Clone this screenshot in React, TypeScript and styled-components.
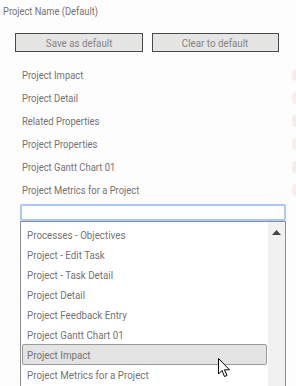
import React from "react";
import styled, { createGlobalStyle } from "styled-components";

const GlobalStyle = createGlobalStyle`
  html, body {
    margin: 0;
    padding: 0;
    background: #fdfdfd;
    overflow: hidden;
  }
  body {
    font-family: Roboto, "Liberation Sans", sans-serif;
    font-size: 11.5px;
    color: #757373;
  }
`;

const Page = styled.div`
  width: 296px;
  height: 386px;
  position: relative;
  overflow: hidden;
`;

// the app renders a narrow face; squeeze Roboto horizontally to match
const Label = styled.span<{ $sx?: number }>`
  display: inline-block;
  white-space: nowrap;
  transform: scaleX(${(p) => p.$sx ?? 0.82});
  transform-origin: left center;
`;

const Title = styled.div`
  padding: 4px 0 0 3px;
  height: 14px;
  line-height: 14px;
`;

const ButtonRow = styled.div`
  display: flex;
  gap: 9px;
  padding: 15px 0 0 15px;
`;

const Button = styled.button<{ $w: number }>`
  width: ${(p) => p.$w}px;
  height: 19px;
  padding: 0;
  display: flex;
  align-items: center;
  justify-content: center;
  background: #e5e5e3;
  border: 1px solid #4a4a4a;
  border-radius: 0;
  font-family: Roboto, "Liberation Sans", sans-serif;
  font-size: 11.5px;
  color: #858383;

  ${Label} {
    transform-origin: center center;
  }
`;

const SavedList = styled.div`
  display: flex;
  flex-direction: column;
  padding-top: 11px;
`;

const SavedRow = styled.div`
  height: 23px;
  display: flex;
  align-items: center;
  justify-content: space-between;
  padding-left: 22px;
`;

const Ghost = styled.span`
  width: 8px;
  height: 12px;
  margin-right: -4px;
  border-radius: 4px;
  background: #f8eded;
`;

const Picker = styled.div`
  margin: 3px 0 0 20px;
  width: 266px;
`;

const SearchBox = styled.div`
  height: 13px;
  border: 2px solid #a8c7fa;
  border-radius: 2px;
  background: #fff;
`;

const Dropdown = styled.div`
  display: flex;
  height: 170px;
  border: 1px solid #8f8f8f;
  border-bottom: none;
  background: #fff;
`;

const Options = styled.div`
  flex: 1;
  display: flex;
  flex-direction: column;
  padding: 3px 1px 0 1px;
`;

const Option = styled.div<{ $active?: boolean }>`
  height: 20px;
  display: flex;
  align-items: center;
  padding-left: ${(p) => (p.$active ? 4 : 5)}px;
  border-radius: 2px;
  box-sizing: border-box;
  ${(p) =>
    p.$active &&
    `
    background: #e4e4e4;
    border: 1px solid #9a9a9a;
    height: 21px;
    margin-top: -1px;
  `}
`;

const Scrollbar = styled.div`
  width: 17px;
  background: #f1f1f1;
  display: flex;
  justify-content: center;
  padding-top: 8px;
`;

const Cursor = styled.svg`
  position: absolute;
  left: 218px;
  top: 358px;
`;

const saved = [
  "Project Impact",
  "Project Detail",
  "Related Properties",
  "Project Properties",
  "Project Gantt Chart 01",
  "Project Metrics for a Project",
];

const options = [
  "Processes - Objectives",
  "Project - Edit Task",
  "Project - Task Detail",
  "Project Detail",
  "Project Feedback Entry",
  "Project Gantt Chart 01",
  "Project Impact",
  "Project Metrics for a Project",
];

export default function App() {
  return (
    <Page>
      <GlobalStyle />
      <Title>
        <Label $sx={0.81}>Project Name (Default)</Label>
      </Title>
      <ButtonRow>
        <Button $w={128}>
          <Label $sx={0.85}>Save as default</Label>
        </Button>
        <Button $w={127}>
          <Label $sx={0.85}>Clear to default</Label>
        </Button>
      </ButtonRow>
      <SavedList>
        {saved.map((s) => (
          <SavedRow key={s}>
            <Label $sx={0.82}>{s}</Label>
            <Ghost />
          </SavedRow>
        ))}
      </SavedList>
      <Picker>
        <SearchBox />
        <Dropdown>
          <Options>
            {options.map((o) => (
              <Option key={o} $active={o === "Project Impact"}>
                <Label $sx={0.85}>{o}</Label>
              </Option>
            ))}
          </Options>
          <Scrollbar>
            <svg width="9" height="5" viewBox="0 0 9 5">
              <path d="M0 5 L4.5 0 L9 5 Z" fill="#444" />
            </svg>
          </Scrollbar>
        </Dropdown>
      </Picker>
      <Cursor width="13" height="20" viewBox="0 0 13 20">
        <path
          d="M0.5 0.5 L0.5 16 L4 12.5 L6.5 18.5 L9 17.5 L6.5 11.8 L11.5 11.8 Z"
          fill="#fff"
          stroke="#000"
          strokeWidth="1"
          strokeLinejoin="miter"
        />
      </Cursor>
    </Page>
  );
}
